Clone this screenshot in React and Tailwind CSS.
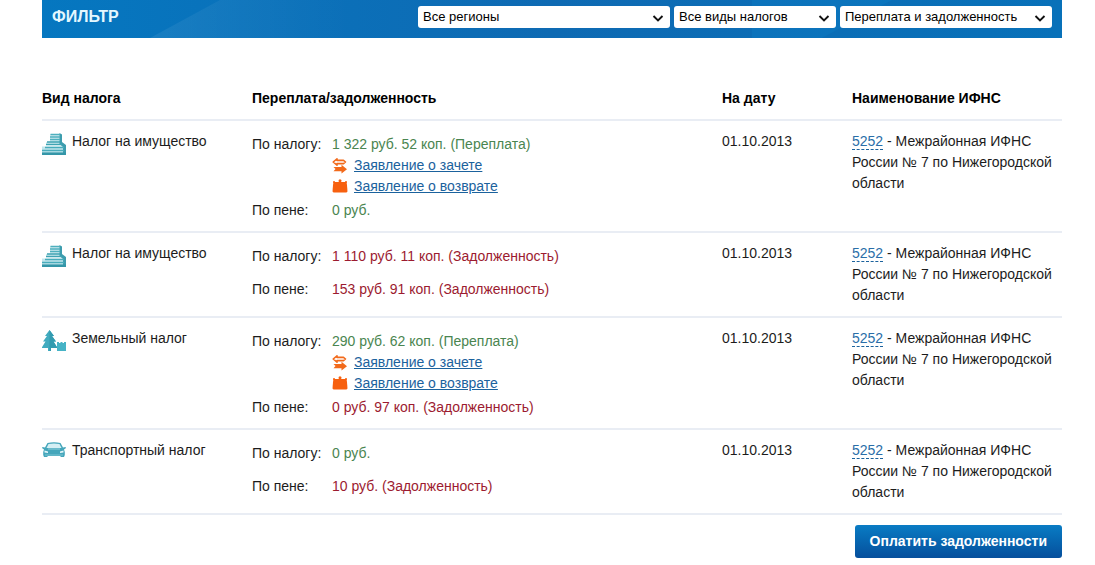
import React, { useState } from "react";

const BuildingIcon = () => (
    <svg width="24" height="24" viewBox="0 0 24 24" className="shrink-0" aria-hidden="true">
        <path d="M8 1h11v11H4V9h4z" fill="#d3edf1" />
        <path d="M0 13.500h22V22H0z" fill="#c3e6ec" />
        <path d="M17.500 0 20 1.500V9l4 3v10h-3v-8l-3.500-3z" fill="#3d9dae" />
        <path d="M8.500 1.500H18M8 4h10M8 6.500h10" stroke="#4fb0be" strokeWidth="1.400" />
        <path d="M5 9h13M4 11.500h16" stroke="#3fa3b3" strokeWidth="1.500" />
        <path d="M3 14.500h19M0 17.500h22" stroke="#48acbb" strokeWidth="1.500" />
        <path d="M0 20.700h24" stroke="#3496a8" strokeWidth="2.600" />
    </svg>
);

const LandIcon = () => (
    <svg width="24" height="24" viewBox="0 0 24 24" className="shrink-0" aria-hidden="true">
        <path d="M7.500 0 12 6h-2l4 5.500h-2.500l4 6.500H9v3H6v-3H-.5l4-6.500H1L5 6H3z" fill="#41abbf" />
        <path d="M7.500 0 12 6h-2l4 5.500h-2.500l4 6.500H9v3H7.500z" fill="#339bb0" />
        <path d="M15 12h2v1h1.500v-1h2v1H22v-1h2v9h-9z" fill="#46b3c6" />
    </svg>
);

const CarIcon = () => (
    <svg width="24" height="24" viewBox="0 0 24 24" className="shrink-0" aria-hidden="true">
        <path d="M5.500 1Q12-.5 18.500 1L21 5.500l2.500-.5.5 1-2 1.500.8 2.500v3l-.8 2h-3.500v-1h-13v1H2l-.8-2v-3L2 7.500 0 6l.5-1 2.500.5z" fill="#45a6bb" />
        <path d="M6.500 2Q12 1 17.500 2l2 4h-15z" fill="#d5eff4" />
        <path d="M2.500 8.500 6 9.500V11l-3.500-.5zM21.500 8.500 18 9.500V11l3.500-.5z" fill="#e4f6f9" />
        <path d="M6 7h12" stroke="#8fd0dc" />
        <path d="M3 13h18" stroke="#7cc5d3" />
    </svg>
);

const SwapIcon = () => (
    <svg width="16" height="16" viewBox="0 0 16 16" className="shrink-0" aria-hidden="true">
        <path d="M5 .8 1.200 4 5 7.200V5.600h6.500L13.500 4l-2-1.600H5z" fill="#fff" stroke="#f26a1b" strokeWidth="1.600" strokeLinejoin="round" />
        <path d="M1.500 9h8V6.800l5.500 4.400-5.500 4.300v-2.300h-8l2-2.100z" fill="#f26a1b" />
    </svg>
);

const PurseIcon = () => (
    <svg width="16" height="16" viewBox="0 0 16 16" className="shrink-0" aria-hidden="true">
        <circle cx="8" cy="1.800" r="1.500" fill="#f7600f" />
        <path d="M1.500 3h13l.5 3 .5 6.500-1 1H1.500l-1-1L1 6z" fill="#f7600f" />
        <path d="M1 3h2M13 3h2" stroke="#f7600f" strokeWidth="1.500" />
    </svg>
);

const filters = [
    { id: "region", label: "Регион", value: "Все регионы", width: "w-[252px]" },
    { id: "tax", label: "Вид налога", value: "Все виды налогов", width: "w-[162px]" },
    { id: "state", label: "Состояние", value: "Переплата и задолженность", width: "w-[212px]" },
];

const taxes = [
    {
        id: 1,
        name: "Налог на имущество",
        Icon: BuildingIcon,
        tax: { text: "1 322 руб. 52 коп. (Переплата)", debt: false },
        fine: { text: "0 руб.", debt: false },
        hasLinks: true,
    },
    {
        id: 2,
        name: "Налог на имущество",
        Icon: BuildingIcon,
        tax: { text: "1 110 руб. 11 коп. (Задолженность)", debt: true },
        fine: { text: "153 руб. 91 коп. (Задолженность)", debt: true },
    },
    {
        id: 3,
        name: "Земельный налог",
        Icon: LandIcon,
        tax: { text: "290 руб. 62 коп. (Переплата)", debt: false },
        fine: { text: "0 руб. 97 коп. (Задолженность)", debt: true },
        hasLinks: true,
    },
    {
        id: 4,
        name: "Транспортный налог",
        Icon: CarIcon,
        tax: { text: "0 руб.", debt: false },
        fine: { text: "10 руб. (Задолженность)", debt: true },
    },
];

const FilterSelect = ({ filter }) => {
    const [value, setValue] = useState(filter.value);

    return (
        <div className={`relative ${filter.width}`}>
            <select
                id={filter.id}
                aria-label={filter.label}
                value={value}
                onChange={(e) => setValue(e.target.value)}
                className="block w-full h-[22px] appearance-none rounded-[3px] bg-white pl-[5px] pr-6 pb-[2px] text-[13px] text-black"
            >
                <option>{filter.value}</option>
            </select>
            <svg width="12" height="8" viewBox="0 0 12 8" className="absolute right-[6px] top-2 pointer-events-none" aria-hidden="true">
                <path d="M1.500 2 6 6.500 10.500 2" fill="none" stroke="#111" strokeWidth="1.900" />
            </svg>
        </div>
    );
};

const Amount = ({ amount }) => (
    <span className={amount.debt ? "text-[#9c1b30]" : "text-[#4a8550]"}>{amount.text}</span>
);

const TaxRow = ({ item }) => {
    const { Icon } = item;

    return (
        <tr className="border-b-2 border-[#e9edf4] align-top">
            <td className="py-[10px]">
                <div className="flex gap-[6px]">
                    <div className="pt-[2px]"><Icon /></div>
                    <span>{item.name}</span>
                </div>
            </td>
            <td className="py-[10px]">
                <dl className="grid grid-cols-[80px_1fr] pt-[3px]">
                    <dt>По налогу:</dt>
                    <dd className={item.hasLinks ? "pb-[3px]" : "pb-3"}>
                        <Amount amount={item.tax} />
                        {item.hasLinks && (
                            <ul>
                                <li className="flex items-center gap-[6px]">
                                    <SwapIcon />
                                    <a href="#offset" className="text-[#1b629d] underline">Заявление о зачете</a>
                                </li>
                                <li className="flex items-center gap-[6px]">
                                    <PurseIcon />
                                    <a href="#refund" className="text-[#1b629d] underline">Заявление о возврате</a>
                                </li>
                            </ul>
                        )}
                    </dd>
                    <dt>По пене:</dt>
                    <dd><Amount amount={item.fine} /></dd>
                </dl>
            </td>
            <td className="py-[10px]">01.10.2013</td>
            <td className="py-[10px]">
                <a href="#ifns" className="border-b border-dashed border-[#1b629d] text-[#2a6ea8]">5252</a>
                {" - Межрайонная ИФНС России № 7 по Нижегородской области"}
            </td>
        </tr>
    );
};

const App = () => {
    return (
        <main className="ml-[42px] mr-[33px] font-['Liberation_Sans',Arial,sans-serif] text-[14px] leading-[21px] text-[#1c1c1c]">
            {/* Filter bar */}
            <form className="relative flex h-[38px] items-start justify-between bg-linear-to-r from-[#0577c0] via-[#0e6ab3] to-[#0871b9] px-[10px] pt-[6px]">
                <svg className="absolute inset-0 h-full w-full" viewBox="0 0 1020 38" preserveAspectRatio="none" aria-hidden="true">
                    <defs>
                        <linearGradient id="ray">
                            <stop offset="0" stopColor="#fff" stopOpacity=".07" />
                            <stop offset="1" stopColor="#fff" stopOpacity="0" />
                        </linearGradient>
                    </defs>
                    <path d="M108 38 178 0h130v38z" fill="url(#ray)" />
                    <path d="M710 0h140l-70 38h-70z" fill="#0a86cf" opacity=".25" />
                </svg>
                <h1 className="relative font-['Liberation_Sans_Narrow','Liberation_Sans',sans-serif] text-[16px] leading-[22px] font-bold text-[#e4f8ff]">ФИЛЬТР</h1>
                <div className="relative flex gap-1">
                    {filters.map((filter) => (
                        <FilterSelect key={filter.id} filter={filter} />
                    ))}
                </div>
            </form>

            {/* Taxes */}
            <table className="mt-10 w-full table-fixed border-collapse text-left">
                <colgroup>
                    <col className="w-[210px]" />
                    <col />
                    <col className="w-[130px]" />
                    <col className="w-[210px]" />
                </colgroup>
                <thead>
                    <tr className="border-b-2 border-[#e9edf4] text-black">
                        <th className="py-[10px]">Вид налога</th>
                        <th className="py-[10px]">Переплата/задолженность</th>
                        <th className="py-[10px]">На дату</th>
                        <th className="py-[10px]">Наименование ИФНС</th>
                    </tr>
                </thead>
                <tbody>
                    {taxes.map((item) => (
                        <TaxRow key={item.id} item={item} />
                    ))}
                </tbody>
            </table>

            <div className="flex justify-end pt-[10px]">
                <button type="button" className="h-[33px] rounded-[3px] bg-linear-to-b from-[#0a7cc4] to-[#064f9c] px-[15px] font-bold text-white">
                    Оплатить задолженности
                </button>
            </div>
        </main>
    );
};

export default App;
